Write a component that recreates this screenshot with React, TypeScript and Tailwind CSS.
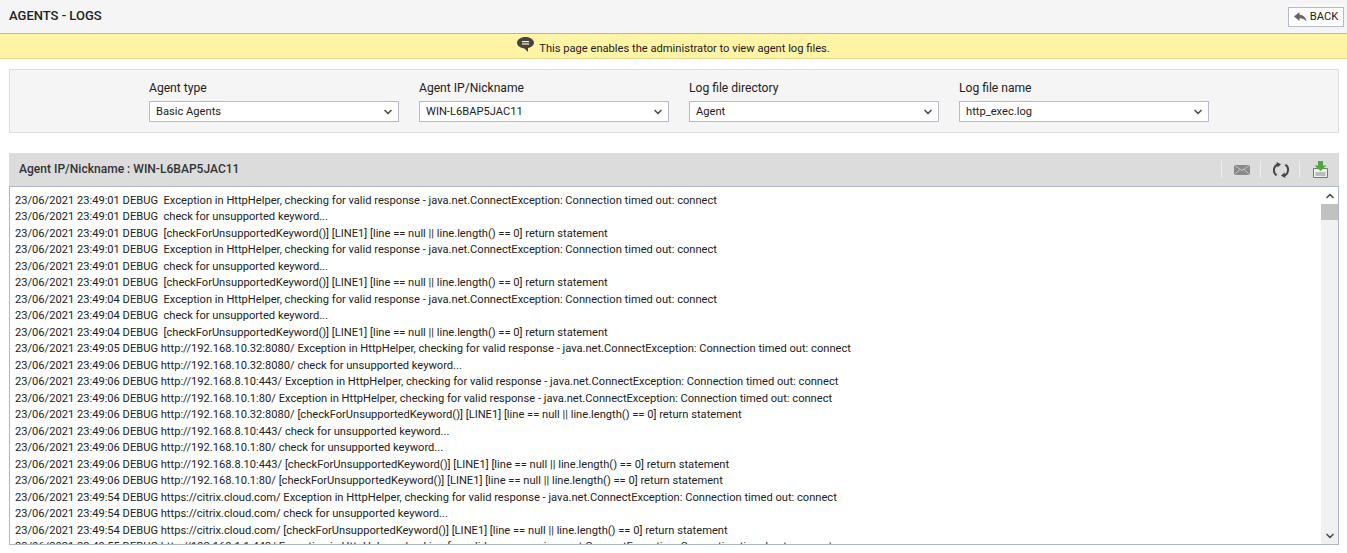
import { ChevronDown, ChevronUp } from "lucide-react";

const lines = [
  "23/06/2021 23:49:01 DEBUG  Exception in HttpHelper, checking for valid response - java.net.ConnectException: Connection timed out: connect",
  "23/06/2021 23:49:01 DEBUG  check for unsupported keyword...",
  "23/06/2021 23:49:01 DEBUG  [checkForUnsupportedKeyword()] [LINE1] [line == null || line.length() == 0] return statement",
  "23/06/2021 23:49:01 DEBUG  Exception in HttpHelper, checking for valid response - java.net.ConnectException: Connection timed out: connect",
  "23/06/2021 23:49:01 DEBUG  check for unsupported keyword...",
  "23/06/2021 23:49:01 DEBUG  [checkForUnsupportedKeyword()] [LINE1] [line == null || line.length() == 0] return statement",
  "23/06/2021 23:49:04 DEBUG  Exception in HttpHelper, checking for valid response - java.net.ConnectException: Connection timed out: connect",
  "23/06/2021 23:49:04 DEBUG  check for unsupported keyword...",
  "23/06/2021 23:49:04 DEBUG  [checkForUnsupportedKeyword()] [LINE1] [line == null || line.length() == 0] return statement",
  "23/06/2021 23:49:05 DEBUG http://192.168.10.32:8080/ Exception in HttpHelper, checking for valid response - java.net.ConnectException: Connection timed out: connect",
  "23/06/2021 23:49:06 DEBUG http://192.168.10.32:8080/ check for unsupported keyword...",
  "23/06/2021 23:49:06 DEBUG http://192.168.8.10:443/ Exception in HttpHelper, checking for valid response - java.net.ConnectException: Connection timed out: connect",
  "23/06/2021 23:49:06 DEBUG http://192.168.10.1:80/ Exception in HttpHelper, checking for valid response - java.net.ConnectException: Connection timed out: connect",
  "23/06/2021 23:49:06 DEBUG http://192.168.10.32:8080/ [checkForUnsupportedKeyword()] [LINE1] [line == null || line.length() == 0] return statement",
  "23/06/2021 23:49:06 DEBUG http://192.168.8.10:443/ check for unsupported keyword...",
  "23/06/2021 23:49:06 DEBUG http://192.168.10.1:80/ check for unsupported keyword...",
  "23/06/2021 23:49:06 DEBUG http://192.168.8.10:443/ [checkForUnsupportedKeyword()] [LINE1] [line == null || line.length() == 0] return statement",
  "23/06/2021 23:49:06 DEBUG http://192.168.10.1:80/ [checkForUnsupportedKeyword()] [LINE1] [line == null || line.length() == 0] return statement",
  "23/06/2021 23:49:54 DEBUG https://citrix.cloud.com/ Exception in HttpHelper, checking for valid response - java.net.ConnectException: Connection timed out: connect",
  "23/06/2021 23:49:54 DEBUG https://citrix.cloud.com/ check for unsupported keyword...",
  "23/06/2021 23:49:54 DEBUG https://citrix.cloud.com/ [checkForUnsupportedKeyword()] [LINE1] [line == null || line.length() == 0] return statement",
];

const filters = [
  { label: "Agent type", value: "Basic Agents" },
  { label: "Agent IP/Nickname", value: "WIN-L6BAP5JAC11" },
  { label: "Log file directory", value: "Agent" },
  { label: "Log file name", value: "http_exec.log" },
];

export default function App() {
  return (
    <div className="flex h-[553px] w-[1347px] flex-col overflow-hidden bg-white font-['Roboto',sans-serif] text-[#222222]">
      <header className="flex h-[34px] shrink-0 items-center justify-between border-b border-[#b3b3b3] bg-[#f5f5f5] pl-[9px] pr-[3px]">
        <h1 className="mb-[3px] text-[13px] font-medium leading-none text-[#222222]">AGENTS - LOGS</h1>
        <button className="flex h-[20px] w-[56px] items-center justify-center gap-[3px] border border-[#b4bccb] bg-white text-[11.2px] leading-none text-[#222222]">
          <svg width="13" height="10" viewBox="0 0 13 10" className="fill-[#666666]">
            <path d="M5.5 0 0 4.5 5.5 9V6.2c3 0 5.2.6 7 3.3C12 5.5 9.5 3 5.5 2.8Z" />
          </svg>
          BACK
        </button>
      </header>

      <div className="flex h-[25px] shrink-0 items-center justify-center border-b border-[#e5d98c] bg-[#fff3a5] text-[11.15px] leading-none text-[#222222]">
        <svg width="17" height="16" viewBox="0 0 17 16" className="mb-[2px] mr-[5px]">
          <path d="M8.5 0C3.8 0 0 2.6 0 5.8c0 3 3.3 5.4 7.4 5.7l3.6 3.5v-4c3.4-.7 6-2.8 6-5.2C17 2.6 13.2 0 8.5 0Z" fill="#444444" />
          <rect x="5" y="4" width="7" height="1.2" fill="#fff3a5" />
          <rect x="5" y="6.4" width="7" height="1.2" fill="#fff3a5" />
        </svg>
        <span className="mt-[6px]">This page enables the administrator to view agent log files.</span>
      </div>

      <section className="ml-[9px] mr-[8px] mt-[10px] flex h-[64px] shrink-0 gap-[20px] border border-[#dddddd] bg-[#f5f5f5] pl-[139px] pt-[10px]">
        {filters.map((f) => (
          <div key={f.label} className="flex w-[250px] flex-col">
            <label className="h-[21px] text-[12.1px] leading-[16px] text-[#222222]">{f.label}</label>
            <div className="flex h-[21px] items-center justify-between border border-[#b4bccb] bg-white pl-[6px] pr-[4px] text-[11.15px] text-[#222222]">
              <span className="mt-[2px]">{f.value}</span>
              <ChevronDown size={12} strokeWidth={3.5} className="text-[#555555]" />
            </div>
          </div>
        ))}
      </section>

      <section className="ml-[9px] mr-[8px] mt-[20px] flex min-h-0 flex-col">
        <div className="flex h-[34px] shrink-0 items-center justify-between border-b border-[#aeb6c6] bg-[#dcdcdc] pl-[10px] pr-[11px]">
          <h2 className="text-[12.05px] font-medium leading-none text-[#333333]">Agent IP/Nickname : WIN-L6BAP5JAC11</h2>
          <div className="flex items-center">
            <span className="h-[17px] w-px bg-[#eeeeee]" />
            <svg width="16" height="10" viewBox="0 0 16 10" className="ml-[12px]">
              <rect width="16" height="10" fill="#8a8a8a" />
              <path d="M0 0 8 5.5 16 0M0 10 6 4.5M16 10 10 4.5" fill="none" stroke="#c4c4c4" strokeWidth="1" />
            </svg>
            <span className="ml-[10px] h-[17px] w-px bg-[#eeeeee]" />
            <svg width="16" height="16" viewBox="0 0 16 16" fill="none" stroke="#444444" strokeWidth="2" className="ml-[12px]">
              <path d="M3.6 13.4A6.3 6.3 0 0 1 5.5 2.2" />
              <path d="M12.4 2.6A6.3 6.3 0 0 1 10.5 13.8" />
              <path d="M3.5 0 8 2.3 4.5 5.6Z" fill="#444444" stroke="none" />
              <path d="M12.5 16 8 13.7 11.5 10.4Z" fill="#444444" stroke="none" />
            </svg>
            <span className="ml-[10px] h-[17px] w-px bg-[#eeeeee]" />
            <svg width="15" height="17" viewBox="0 0 15 17" className="ml-[13px]">
              <path d="M.5 7.5h14v9H.5Z" fill="#f0f0f0" stroke="#777777" />
              <path d="M2.5 12h10M2.5 14h10" stroke="#888888" />
              <path d="M5 0h5v4.5h3.5L7.5 10 1.5 4.5H5Z" fill="#4fa83d" />
            </svg>
          </div>
        </div>

        <div className="flex h-[358px] border border-t-0 border-[#aeb6c6]">
          <div className="min-w-0 flex-1 overflow-hidden pl-[5px] pt-[5.5px]">
            {lines.map((line, i) => (
              <div key={i} className="h-[16.5px] whitespace-pre text-[11.135px] leading-[16.5px] text-[#222222]">
                {line}
              </div>
            ))}
            <div className="h-[16.5px] overflow-hidden whitespace-pre text-[11.135px] leading-[16.5px] text-[#222222]">
              23/06/2021 23:49:55 DEBUG http://192.168.1.1:443/ Exception in HttpHelper, checking for valid response - java.net.ConnectException: Connection timed out: connect
            </div>
          </div>
          <div className="flex w-[17px] shrink-0 flex-col items-center justify-between bg-[#f1f1f1]">
            <div className="flex w-full flex-col">
              <div className="flex h-[17px] items-center justify-center bg-white">
                <ChevronUp size={12} strokeWidth={3.5} className="text-[#505050]" />
              </div>
              <div className="h-[16px] w-full bg-[#c1c1c1]" />
            </div>
            <div className="flex h-[17px] items-center justify-center">
              <ChevronDown size={12} strokeWidth={3.5} className="text-[#505050]" />
            </div>
          </div>
        </div>
      </section>
    </div>
  );
}
